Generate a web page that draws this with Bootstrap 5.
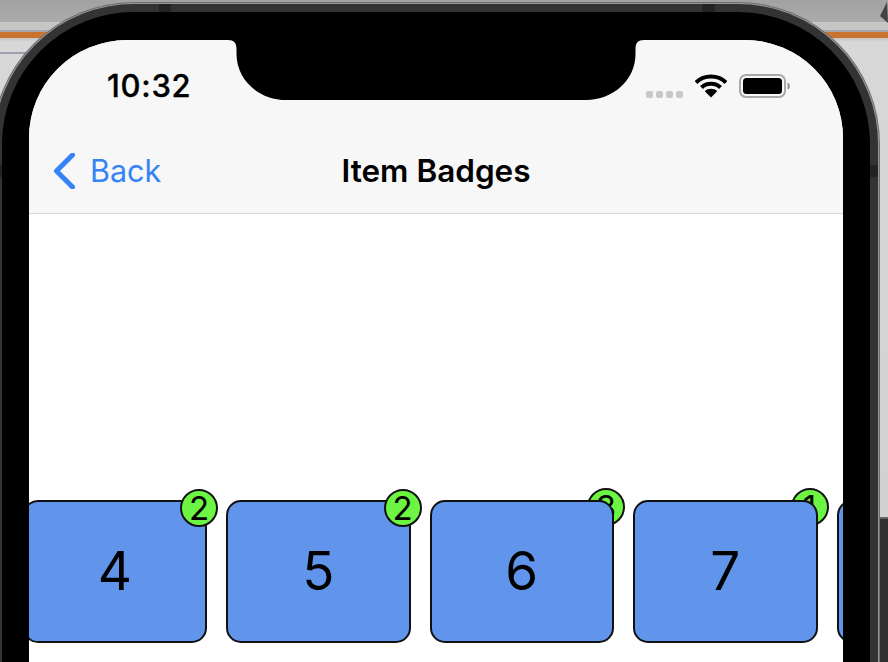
<!DOCTYPE html>
<html lang="en"><head><meta charset="utf-8">
<link href="https://cdn.jsdelivr.net/npm/bootstrap@5.3.0/dist/css/bootstrap.min.css" rel="stylesheet">
<style>
html,body{height:662px;overflow:hidden;margin:0}
body{font-family:Inter,"Liberation Sans",sans-serif;color:#000}
.stage{position:relative;height:662px;overflow:hidden;background:linear-gradient(#a0a0b0,#a0a0b0) 0 52px/44px 2px no-repeat,linear-gradient(#a2a2a2 0,#ababab 22px,#c6c6c6 22px,#c6c6c6 30px,#a9a5ad 30px,#a9a5ad 32px,#c8732f 32px,#c8732f 38px,#c4c4c4 38px,#d8d8d8 42px,#d2d2d2 480px)}
.sidewin{position:absolute;right:0;top:517px;bottom:0;width:10px;background:#303030;border-top:2px solid #666}
.arrowbit{position:absolute;right:0;top:2px}
.phone{position:absolute;left:-6px;top:4px;width:884px;height:1000px;background:#000;border:8px solid #333;border-radius:140px;box-shadow:0 0 0 1px #979797,0 0 0 2px #6e6e6e}
.band{position:absolute;background:#232323}
.band-a{left:157px;top:-8px;width:12px;height:8px}
.band-b{left:700px;top:-8px;width:13px;height:8px}
.band-c{right:-8px;top:153px;width:8px;height:12px}
.band-d{left:-8px;top:153px;width:8px;height:12px}
.glass{position:absolute;left:27px;top:28px;width:814px;height:940px;background:#fff;border-radius:98px 98px 0 0;overflow:hidden}
.topbar{height:174px;background:#f7f7f7;border-bottom:1px solid #d6d6d6;position:relative}
.notch{position:absolute;left:199px;top:0;width:416px}
.clock{position:absolute;left:78px;top:27px;font-size:31px;font-weight:500;line-height:38px;letter-spacing:.7px;-webkit-text-stroke:.3px #000}
.sig{position:absolute;left:617px;top:51px;gap:3px}
.sig i{display:block;width:7px;height:7px;border-radius:2px;background:#c8c8c8}
.wifi{position:absolute;left:666px;top:34px}
.batt{position:absolute;left:710px;top:33px}
.backlink{position:absolute;left:24px;top:113px;color:#3683f7;font-size:30.5px;line-height:36px;gap:15px}
.navtitle{position:absolute;left:0;right:0;top:113px;text-align:center;font-size:31.5px;font-weight:600;line-height:36px;letter-spacing:0}
.rail{margin-top:285.5px;margin-left:-6.5px;gap:19px;width:1000px}
.tile{flex:0 0 184.5px;height:143.5px;background:#6195ec;border:2px solid #111;border-radius:15px;position:relative;font-size:53px;font-weight:400;line-height:1}
.pip{position:absolute;width:38px;height:38px;border-radius:50%;background:#6cf542;border:2px solid #111;font-size:33px;font-weight:400;line-height:34px;text-align:center}
.pip-top{right:-13px;top:-13px;z-index:2}
.pip-under{z-index:-1}
.holder{position:relative;flex:0 0 184.5px;height:143.5px;isolation:isolate}
.holder .pip{right:-11px;top:-12px}
</style></head><body>
<div class="stage">
<div class="sidewin"></div>
<svg class="arrowbit" width="8" height="22" viewBox="0 0 8 22"><path d="M7 0L8 21L0 14Z" fill="#444"/></svg>
<div class="phone">
<span class="band band-a"></span><span class="band band-b"></span><span class="band band-c"></span><span class="band band-d"></span>
<div class="glass">
<div class="topbar">
<svg class="notch" viewBox="0 0 416 60" height="60"><path fill="#000" d="M0 0H416C410 0 407.500 3 407.500 9V14C407.500 40 385 60 358 60H58C31 60 8.500 40 8.500 14V9C8.500 3 6 0 0 0Z"/></svg>
<div class="clock">10:32</div>
<div class="sig d-flex"><i></i><i></i><i></i><i></i></div>
<svg class="wifi" width="32" height="24" viewBox="0 0 32 24"><path d="M1 8.500C9 0.500 23 0.500 31 8.500" fill="none" stroke="#000" stroke-width="4"/><path d="M6.500 13.500C11.500 8.500 20.500 8.500 25.500 13.500" fill="none" stroke="#000" stroke-width="4"/><path d="M16 23.500L9.800 17.200C13 14 19 14 22.200 17.200Z"/></svg>
<svg class="batt" width="52" height="26" viewBox="0 0 52 26"><rect x="1" y="2" width="45" height="22" rx="6" fill="none" stroke="#a9a9a9" stroke-width="2"/><rect x="4" y="5" width="39" height="16" rx="3.500"/><path d="M48.500 9.500C50.500 10 51 11.500 51 13S50.500 16 48.500 16.500Z" fill="#999"/></svg>
<div class="backlink d-flex align-items-center"><svg width="22" height="36" viewBox="0 0 22 36"><path d="M19.500 2L3.500 18L19.500 34" fill="none" stroke="#3683f7" stroke-width="5" stroke-linecap="round" stroke-linejoin="round"/></svg><span>Back</span></div>
<div class="navtitle">Item Badges</div>
</div>
<div class="rail d-flex">
<div class="tile d-flex align-items-center justify-content-center">4<span class="pip pip-top">2</span></div>
<div class="tile d-flex align-items-center justify-content-center">5<span class="pip pip-top">2</span></div>
<div class="holder"><span class="pip pip-under">3</span><div class="tile d-flex align-items-center justify-content-center">6</div></div>
<div class="holder"><span class="pip pip-under">1</span><div class="tile d-flex align-items-center justify-content-center">7</div></div>
<div class="tile"></div>
</div>
</div></div>
</div>
<script src="https://cdn.jsdelivr.net/npm/bootstrap@5.3.0/dist/js/bootstrap.bundle.min.js"></script>
</body></html>
